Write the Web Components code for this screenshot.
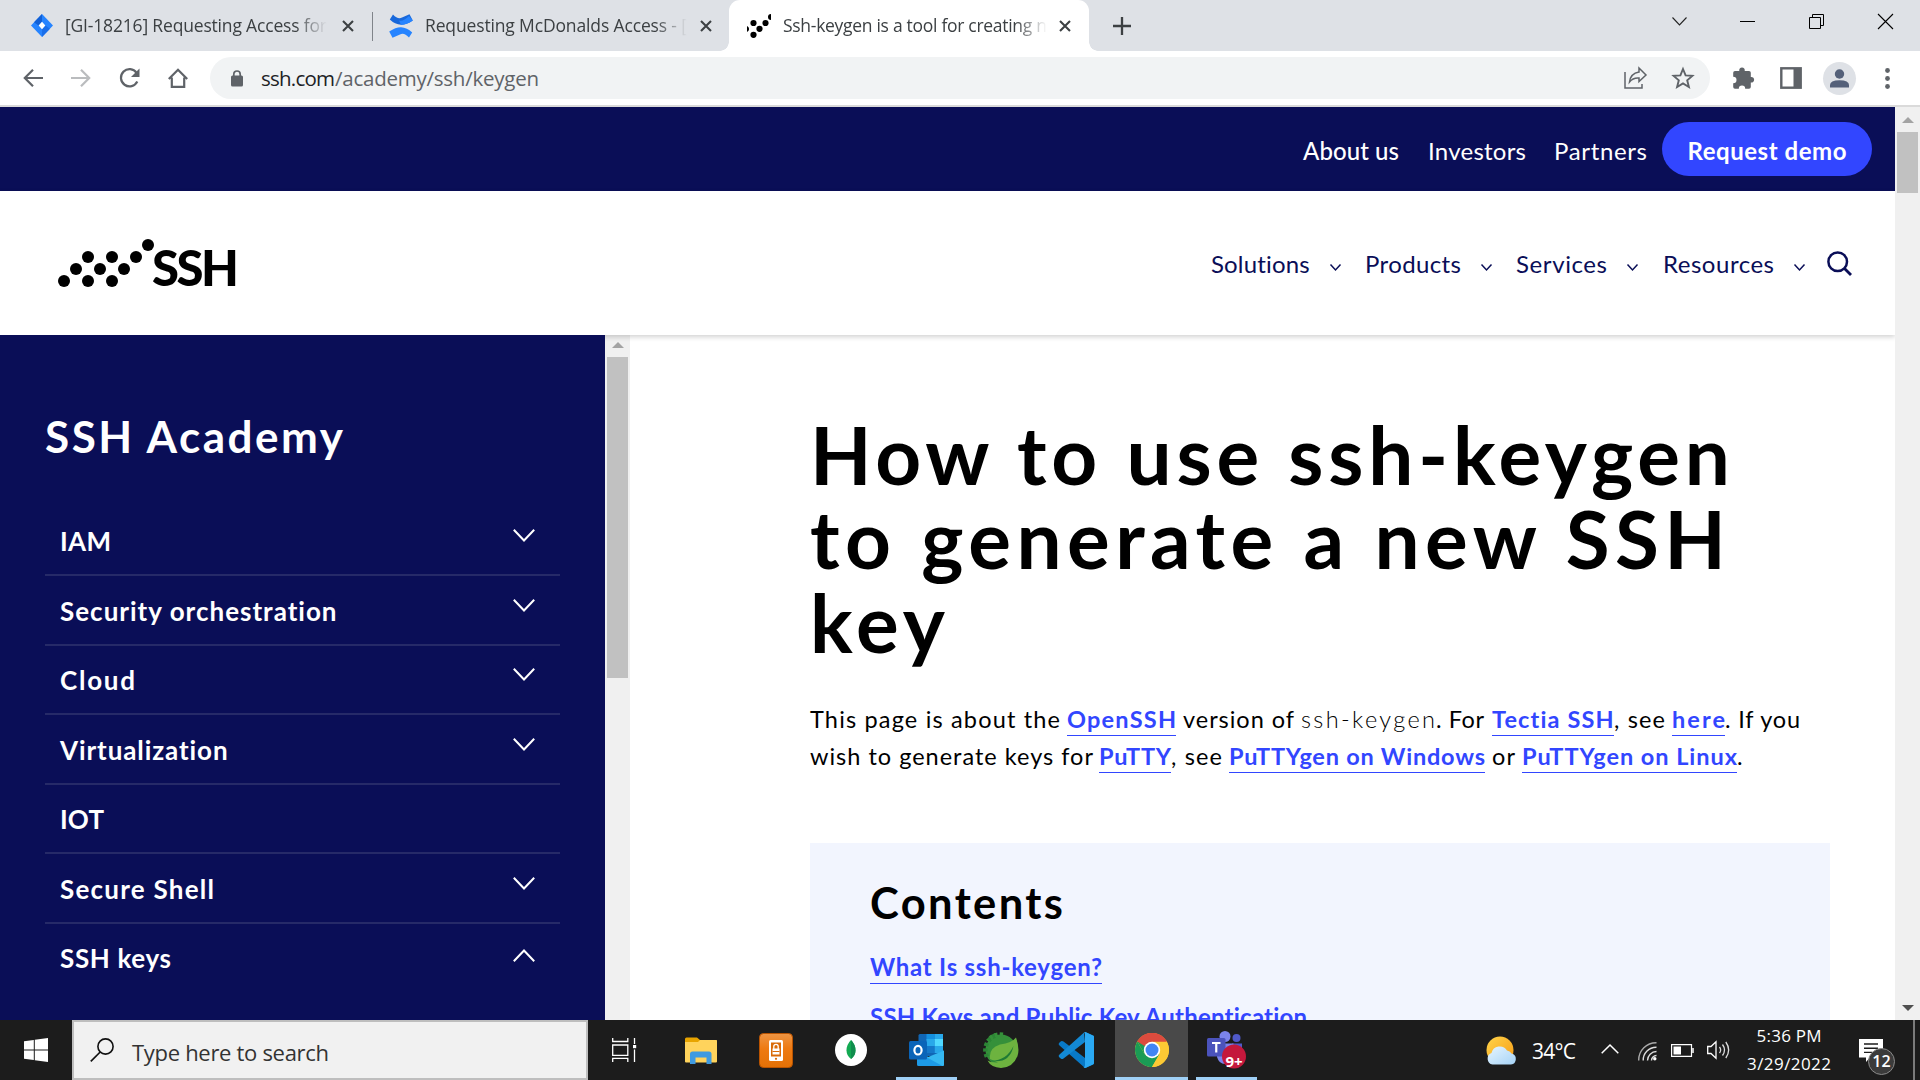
<!DOCTYPE html>
<html lang="en">
<head>
<meta charset="utf-8">
<title>Ssh-keygen is a tool for creating new authentication key pairs</title>
<style>
html,body{margin:0;width:1920px;height:1080px;overflow:hidden;background:#fff}
</style>
</head>
<body>
<desktop-screen></desktop-screen>
<script>
const ICONS = {
jira:[22,23,`<path d="M11 0 22 11.500 11 23 0 11.500Z" fill="#2684ff"/><path d="M11 0v8L7.500 11.500 3 8.300Z" fill="#1260d6"/><path d="M11 23v-8l3.500-3.500L19 14.700Z" fill="#1a6eea"/><path d="M11 7.800 14.300 11.500 11 15.200 7.700 11.500Z" fill="#fff"/>`],
confluence:[24,24,`<path d="M4 .5Q9 6 13 3.600L20.500.2 23.800 6.500Q17 11 12 10.800 6 10.500.8 5.500Z" fill="#1868db"/><path d="M10 6.500Q14 8 20 2L23.800 6.500Q17 11 12 10.800Z" fill="#2684ff"/><path d="M20 23.500Q15 18 11 20.400L3.500 23.800.2 17.500Q7 13 12 13.200 18 13.500 23.200 18.500Z" fill="#2684ff"/>`],
dots:[24,24,`<g><circle cx="6.500" cy="9" r="3.100"/><circle cx="18.500" cy="9" r="3.100"/><circle cx="12.500" cy="14.800" r="3.100"/><circle cx="6.500" cy="20.800" r="3.100"/><path d="M0 12a3.200 3.200 0 0 1 0 6ZM24 0v6a3 3 0 0 1 0-6Z"/></g>`],
x:[12,12,`<path d="M1 1 11 11M11 1 1 11" stroke="#3c4043" stroke-width="2.100" fill="none"/>`],
plus:[18,18,`<path d="M9 0V18M0 9H18" stroke="#3c4043" stroke-width="2.300"/>`],
wchev:[15,9,`<path d="M.5.5 7.500 8 14.500.5" stroke="#222" fill="none" stroke-width="1.100"/>`],
wmin:[15,15,`<path d="M0 7.500H15" stroke="#000"/>`],
wmax:[15,15,`<path d="M.5 3.500h11v11H.5ZM3.500 3.500v-3h11v11h-3" stroke="#000" fill="none"/>`],
wclose:[15,15,`<path d="M0 0 15 15M15 0 0 15" stroke="#000" stroke-width="1.100"/>`],
back:[20,18,`<path d="M20 9H2M10 .8 1.800 9 10 17.200" stroke="#5f6368" stroke-width="2.200" fill="none"/>`],
fwd:[20,18,`<path d="M0 9H18M10 .8 18.200 9 10 17.200" stroke="#babcbe" stroke-width="2.200" fill="none"/>`],
reload:[21,20,`<path d="M17.600 4.800A8.600 8.600 0 1 0 18.300 13.500" stroke="#5f6368" stroke-width="2.200" fill="none"/><path d="M20.500.5V9H12Z" fill="#5f6368"/>`],
home:[20,20,`<path d="M3.800 9.500V18.800H16.200V9.500M.8 11 10 1.800 19.200 11" stroke="#5f6368" stroke-width="2.200" fill="none"/>`],
lock:[12,17,`<rect y="5.500" width="12" height="11" rx="1.500" fill="#5f6368"/><path d="M2.800 7V4.200a3.200 3.200 0 0 1 6.400 0V7" fill="none" stroke="#5f6368" stroke-width="1.700"/>`],
share:[23,22,`<path d="M1 5V21H18V17" fill="none" stroke="#5f6368" stroke-width="1.500"/><path d="M15 1 22 8 15 14.500V11Q9 10.500 5.500 15 6.500 6.500 15 5Z" fill="none" stroke="#5f6368" stroke-width="1.500"/>`],
star:[22,22,`<path d="M11 2 13.600 8.400 20.400 8.900 15.200 13.300 16.900 20 11 16.400 5.100 20 6.800 13.300 1.600 8.900 8.400 8.400Z" fill="none" stroke="#5f6368" stroke-width="1.900"/>`],
puzzle:[22,22,`<path d="M2 4H6.300A2.800 2.800 0 1 1 11.700 4H16a1.800 1.800 0 0 1 1.800 1.800V10A2.800 2.800 0 1 1 17.800 15.500V20A1.800 1.800 0 0 1 16 21.700H12.200A3.200 3.200 0 0 0 5.800 21.700H2A1.800 1.800 0 0 1 .2 20V16.300A3.200 3.200 0 0 0 .2 9.700V5.800A1.800 1.800 0 0 1 2 4Z" fill="#5f6368"/>`],
panel:[22,22,`<rect x="1.300" y="1.300" width="19.400" height="19.400" fill="#fff" stroke="#5f6368" stroke-width="2.400"/><rect x="13.500" y="1" width="7.500" height="20" fill="#5f6368"/>`],
avatar:[33,33,`<circle cx="16.500" cy="16.500" r="16.500" fill="#dee1e6"/><circle cx="16.500" cy="12" r="4.700" fill="#546079"/><path d="M7 25.500V23Q7 18.300 16.500 18.200 26 18.300 26 23V25.500Z" fill="#546079"/>`],
kebab:[5,21,`<g fill="#5f6368"><circle cx="2.500" cy="2.500" r="2.400"/><circle cx="2.500" cy="10.500" r="2.400"/><circle cx="2.500" cy="18.500" r="2.400"/></g>`],
navchev:[11,7,`<path d="M.5.5 5.500 6 10.500.5" stroke="#0a0e57" fill="none" stroke-width="1.500"/>`],
search:[25,25,`<circle cx="10.700" cy="10.700" r="9.300" fill="none" stroke="#0a0e57" stroke-width="2.500"/><path d="M17.500 17.500 24 24" stroke="#0a0e57" stroke-width="2.800"/>`],
down:[22,13,`<path d="M.8.8 11 11.500 21.200.8" stroke="#fff" fill="none" stroke-width="2"/>`],
up:[22,13,`<path d="M.8 12.200 11 1.500 21.200 12.200" stroke="#fff" fill="none" stroke-width="2"/>`],
logodots:[96,48,`<g><circle cx="6" cy="42" r="6"/><circle cx="30" cy="42" r="6"/><circle cx="54" cy="42" r="6"/><circle cx="18" cy="30" r="6"/><circle cx="42" cy="30" r="6"/><circle cx="66" cy="30" r="6"/><circle cx="30" cy="18" r="6"/><circle cx="54" cy="18" r="6"/><circle cx="78" cy="18" r="6"/><circle cx="90" cy="6" r="6"/></g>`],
win:[24,24,`<path d="M0 3.300 9.800 2V11.400H0ZM10.800 1.800 24 0V11.400H10.800ZM0 12.500H9.800V22L0 20.700ZM10.800 12.500H24V24L10.800 22.200Z" fill="#fff"/>`],
mag:[24,24,`<circle cx="15.500" cy="8.500" r="7.600" fill="none" stroke="#111" stroke-width="1.600"/><path d="M10.200 14 .8 23.400" stroke="#111" stroke-width="1.700"/>`],
taskview:[25,24,`<path d="M.7 0V3.500H15.800V0M.7 24V20.300H15.800V24M.7 7H15.800V17.300H.7ZM22.500 0V6M22.500 11.500V24" fill="none" stroke="#fff" stroke-width="1.300"/><rect x="21" y="7" width="3.200" height="3.200" fill="#fff"/>`],
explorer:[32,27,`<path d="M0 2A1.500 1.500 0 0 1 1.500.5H12L15 3V6H0Z" fill="#e8a400"/><path d="M0 5H13L15 3H31.500Q32 3 32 4V24.500Q32 25.500 31 25.500H1Q0 25.500 0 24.500Z" fill="#ffd35c"/><path d="M5 27V17Q5 14.500 7.500 14.500H24Q26.500 14.500 26.500 17V27H21.500V20.500H10.500V27Z" fill="#3f9ae0"/>`],
phone:[34,35,`<defs><linearGradient id="g" x2="0" y2="1"><stop stop-color="#ee9544"/><stop offset=".45" stop-color="#ee7a12"/><stop offset="1" stop-color="#e47106"/></linearGradient></defs><rect x=".5" y=".5" width="33" height="34" rx="4" fill="url(#g)" stroke="#b95300"/><rect x="10" y="7" width="14" height="21" rx="1.500" fill="#fff"/><rect x="12" y="9.500" width="10" height="14" fill="#d96a08"/><rect x="13.500" y="15.500" width="7" height="6" fill="#fff"/><path d="M14.800 16V13.500a2.200 2.200 0 0 1 4.400 0V16" fill="none" stroke="#fff" stroke-width="1.300"/><path d="M13.500 18.500h7" stroke="#d96a08"/><circle cx="17" cy="25.800" r="1.100" fill="#d96a08"/>`],
mongo:[32,32,`<circle cx="16" cy="16" r="16" fill="#fff"/><path d="M16 6Q11.500 10.500 11.500 16.500 11.500 21.500 16 25 20.500 21.500 20.500 16.500 20.500 10.500 16 6Z" fill="#13aa52"/><path d="M16 6Q20.500 10.500 20.500 16.500 20.500 21.500 16 25Z" fill="#118d4d"/>`],
outlook:[35,32,`<rect x="9.500" width="24.500" height="22" rx="1.500" fill="#1066b5"/><rect x="17.500" y="0" width="8.200" height="6" fill="#1490df"/><rect x="25.700" y="0" width="8.300" height="6" fill="#28a8ea"/><rect x="17.500" y="5" width="8.200" height="7" fill="#28a8ea"/><rect x="25.700" y="5" width="8.300" height="7" fill="#50d9ff"/><rect x="17.500" y="12" width="8.200" height="7" fill="#1478c9"/><rect x="25.700" y="12" width="8.300" height="7" fill="#28a8ea"/><path d="M8 17 21.500 24 35 16.500V30.500A1.500 1.500 0 0 1 33.500 32H9.500A1.500 1.500 0 0 1 8 30.500Z" fill="#1d9ae6"/><path d="M35 16.500V30.500A1.500 1.500 0 0 1 33.500 32L18 23.500Z" fill="#35b8f1"/><rect y="7" width="18" height="18.500" rx="1.500" fill="#0a64b8"/><ellipse cx="9" cy="16.200" rx="3.600" ry="4.300" fill="none" stroke="#fff" stroke-width="2.200"/>`],
spring:[36,36,`<circle cx="18" cy="18" r="15.500" fill="#35903a"/><path d="M12 3.700A15.500 15.500 0 0 0 4 25" fill="none" stroke="#2c8535" stroke-width="4.500" stroke-dasharray="3.200 2.300"/><path d="M20 2.500Q10 .8 5 9" fill="none" stroke="#35903a" stroke-width="4" stroke-dasharray="3.200 2.300"/><path d="M33 5.500Q37 17 34.500 24 30 35.500 18 36 8 35.500 4.500 28.500 8 31 15 30.500L7 27Q5.500 16 17 12.500 29 11 33 5.500Z" fill="#6db33f"/><path d="M5.500 28.500Q23 30 30.500 14 26.500 33 5.500 28.500Z" fill="#1f7a35"/>`],
vscode:[36,36,`<path d="M27 0 36 4V32L27 36 1.500 13.500Q0 12.300 1 11L3 9.200Q4.200 8.500 5.500 9.500L27 26Z" fill="#0879c7"/><path d="M27 10 5.500 26.500Q4.200 27.500 3 26.800L1 25Q0 23.700 1.500 22.500L26 .5Z" fill="#1389d4"/><path d="M26 .5Q27-.3 28 .2L35 3.600Q36 4 36 5V31Q36 32 35 32.400L28 35.800Q26.500 36.300 25.500 35 27 35.500 27 33V3Q27 1 26 .5Z" fill="#2aa9f3"/>`],
chrome:[34,34,`<circle cx="17" cy="17" r="17" fill="#fcc934"/><path d="M17 17 2.300 8.500A17 17 0 0 1 31.700 8.500Z" fill="#db4437"/><path d="M2.300 8.500A17 17 0 0 0 17 34L24.400 21.300 9.600 21.300Z" fill="#1a9c55"/><path d="M17 8.500H31.700A17 17 0 0 1 17 34L24.400 21.200Z" fill="#fcc934"/><path d="M2.300 8.500 9.600 21.300 17 8.500Z" fill="#1a9c55"/><path d="M2.300 8.500A17 17 0 0 1 31.700 8.500H17L9.600 13Z" fill="#dc4b3e"/><circle cx="17" cy="17" r="8.200" fill="#fff"/><circle cx="17" cy="17" r="6.500" fill="#4285f4"/>`],
teams:[39,38,`<circle cx="18" cy="5.500" r="5.500" fill="#7b83eb"/><circle cx="29.500" cy="7" r="4" fill="#5059c9"/><path d="M25 12.500H35V22Q34 28 27 28Z" fill="#5059c9"/><path d="M10 12.500H26.500V24Q26 33 18 33 12 33 10 26Z" fill="#7b83eb"/><rect y="7" width="18.500" height="18.500" rx="1.500" fill="#4b53bc"/><path d="M5 12H13.500M9.250 12V21.500" stroke="#fff" stroke-width="2.200"/><circle cx="27" cy="25.500" r="12" fill="#c4183c"/>`],
weather:[31,29,`<defs><linearGradient id="s" x2="1" y2="1"><stop stop-color="#ffd54a"/><stop offset="1" stop-color="#f79a14"/></linearGradient><linearGradient id="c" x2="1" y2="1"><stop stop-color="#e6f5ff"/><stop offset="1" stop-color="#a6d3f6"/></linearGradient></defs><circle cx="14" cy="14" r="13.500" fill="url(#s)"/><path d="M6.500 28.500A6 6 0 0 1 5.500 17 8.500 8.500 0 0 1 21 14.500 6 6 0 0 1 25.500 17.500 5.600 5.600 0 0 1 25 28.500Z" fill="url(#c)"/>`],
caret:[18,10,`<path d="M.7 9.300 9 1 17.300 9.300" stroke="#fff" fill="none" stroke-width="1.500"/>`],
wifi:[19,19,`<g fill="none" stroke="#ddd" stroke-width="1.400"><path d="M.7 18.500A17.500 17.500 0 0 1 18.500.7" stroke="#aaa"/><path d="M5.200 18.500A13 13 0 0 1 18.500 5.200"/><path d="M9.500 18.500A9 9 0 0 1 18.500 9.500"/><path d="M13.500 18.500A5 5 0 0 1 18.500 13.500"/></g><circle cx="16.800" cy="16.800" r="1.700" fill="#fff"/>`],
battery:[23,13,`<path d="M.6.6H20.500V12.400H.6Z" fill="none" stroke="#fff" stroke-width="1.200"/><rect x="2.500" y="2.500" width="7.500" height="8" fill="#fff"/><path d="M22 4V9" stroke="#fff" stroke-width="1.500"/>`],
volume:[23,18,`<path d="M.7 5.500H4L9 .8V17.200L4 12.500H.7Z" fill="none" stroke="#fff" stroke-width="1.300"/><g fill="none" stroke="#ddd" stroke-width="1.300"><path d="M12.500 6Q14.800 9 12.500 12M15.500 3.500Q19.500 9 15.500 14.500M18.800 1Q24.500 9 18.800 17"/></g>`],
note:[24,23,`<path d="M0 0H24V18.500H11L7 23V18.500H0Z" fill="#fff"/><path d="M5 5H19M5 9.200H19M5 13.400H13" stroke="#1c1c1c" stroke-width="1.400"/>`],
};

class Base extends HTMLElement{
  connectedCallback(){
    if(this.shadowRoot) return;
    this.attachShadow({mode:"open"}).innerHTML = this.view();
    this.ready?.();
  }
  a(n,d=""){ return this.getAttribute(n) ?? d; }
}

customElements.define("ui-icon", class extends Base{
  view(){
    const [w,h,b]=ICONS[this.a("name")];
    return `<style>:host{display:block;flex:none;width:${w}px;height:${h}px}svg{display:block;overflow:visible}</style><svg width="${w}" height="${h}" viewBox="0 0 ${w} ${h}">${b}</svg>`;
  }
});

/* One run of text, tracked so that it fills the width in the w attribute. */
customElements.define("ui-text", class extends Base{
  view(){
    const link=this.hasAttribute("link"), s=+this.a("size","24");
    return `<style>
    :host{display:block;flex:none;white-space:pre;font-size:${s}px;line-height:1.2;font-weight:${this.a("weight",link?"700":"400")};${link?"color:#3246ff;":""}width:${this.a("w")}px;box-sizing:content-box}
    span{display:inline-block;${link?"width:100%;border-bottom:1px solid #3246ff;padding-bottom:2px":""}}
    </style><span><slot></slot></span>`;
  }
  ready(){
    const w=+this.a("w"), n=this.textContent.length, r=document.createRange();
    r.selectNodeContents(this);
    const nat=r.getBoundingClientRect().width;
    if(w&&n>1&&nat) this.shadowRoot.querySelector("span").style.letterSpacing=((w-nat)/(n-1)).toFixed(3)+"px";
  }
});

customElements.define("scroll-bar", class extends Base{
  view(){ return `<style>
  :host{display:flex;flex-direction:column;align-items:center;flex:none;width:25px;height:100%;box-sizing:border-box;background:#f0f0f0;padding:var(--pt,10px) 0 9px}
  .u{border:6px solid transparent;border-top:0;border-bottom:6px solid #a3a3a3}
  .t{width:21px;background:#c1c1c1;height:${this.a("thumb")}px;margin-top:9px}
  .d{margin-top:auto;border:6px solid transparent;border-bottom:0;border-top:6px solid #505050}
  </style><i class="u"></i><i class="t"></i>${this.hasAttribute("down")?'<i class="d"></i>':''}`; }
});

customElements.define("browser-tab", class extends Base{
  view(){ const on=this.hasAttribute("active"), bg=on?"#fff":"#dee1e6"; return `<style>
  :host{display:flex;flex:none;align-items:center;height:51px;box-sizing:border-box;background:${bg};color:#3c4043;${on?"border-radius:11px 11px 0 0;":""}position:relative}
  .f{overflow:hidden;-webkit-mask-image:linear-gradient(90deg,#000 calc(100% - 32px),transparent)}
  ${on?`:host::before,:host::after{content:"";position:absolute;bottom:0;width:9px;height:9px}
  :host::before{left:-9px;background:radial-gradient(circle at 0 0,transparent 8.500px,#fff 9px)}
  :host::after{right:-9px;background:radial-gradient(circle at 100% 0,transparent 8.500px,#fff 9px)}`:""}
  </style><ui-icon name="${this.a("icon")}"></ui-icon><div class="f" style="margin-left:${this.a("gap","12")}px"><slot></slot></div><ui-icon name="x" style="margin-left:${this.a("xgap","15")}px"></ui-icon>`; }
});

customElements.define("tab-strip", class extends Base{
  view(){ return `<style>
  :host{display:flex;height:51px;background:#dee1e6;align-items:center;font-family:"Open Sans","Noto Sans",sans-serif}
  ui-icon{margin-bottom:8px}
  i{width:1px;height:29px;background:#80848a;margin-left:18px;margin-right:16px;margin-top:2px}
  </style>
  <browser-tab icon="jira" style="margin-left:31px;width:323px" gap="12"><ui-text size="17.500" w="262">[GI-18216] Requesting Access for</ui-text></browser-tab><i></i>
  <browser-tab icon="confluence" style="width:340px" xgap="13"><ui-text size="17.500" w="262">Requesting McDonalds Access - [</ui-text></browser-tab>
  <browser-tab active icon="dots" style="width:360px;padding-left:18px" xgap="12"><ui-text size="17.500" w="264">Ssh-keygen is a tool for creating n</ui-text></browser-tab>
  <ui-icon name="plus" style="margin:0 0 0 24px"></ui-icon>
  <ui-icon name="wchev" style="margin-left:541px"></ui-icon><ui-icon name="wmin" style="margin-left:53px"></ui-icon>
  <ui-icon name="wmax" style="margin-left:54px"></ui-icon><ui-icon name="wclose" style="margin-left:54px"></ui-icon>`; }
});

customElements.define("browser-toolbar", class extends Base{
  view(){ return `<style>
  :host{display:flex;height:56px;box-sizing:border-box;background:#fff;border-bottom:2px solid #dadada;align-items:center;padding-left:23px;font-family:"Open Sans","Noto Sans",sans-serif}
  .o{display:flex;align-items:center;width:1500px;height:42px;border-radius:21px;background:#f1f3f4;margin-left:22px}
  </style>
  <ui-icon name="back"></ui-icon><ui-icon name="fwd" style="margin-left:28px"></ui-icon><ui-icon name="reload" style="margin-left:28px"></ui-icon><ui-icon name="home" style="margin-left:28px"></ui-icon>
  <div class="o"><ui-icon name="lock" style="margin-left:21px"></ui-icon><ui-text size="20.500" w="74" style="margin-left:18px;color:#202124">ssh.com</ui-text><ui-text size="20.500" w="204" style="color:#5f6368">/academy/ssh/keygen</ui-text>
  <ui-icon name="share" style="margin-left:1085px"></ui-icon><ui-icon name="star" style="margin-left:25px"></ui-icon></div>
  <ui-icon name="puzzle" style="margin-left:23px"></ui-icon><ui-icon name="panel" style="margin-left:25px"></ui-icon><ui-icon name="avatar" style="margin-left:21px"></ui-icon><ui-icon name="kebab" style="margin-left:29px"></ui-icon>`; }
});

customElements.define("site-topbar", class extends Base{
  view(){ return `<style>
  :host{display:flex;height:84px;background:#0a0e57;color:#fff;align-items:center;padding-left:1303px}
  ui-text{padding-top:4px}
  .b{display:flex;align-items:center;justify-content:center;width:210px;height:54px;border-radius:27px;background:#3246ff;margin-left:15px}
  </style><ui-text w="96" weight="500">About us</ui-text><ui-text w="98" style="margin-left:29px">Investors</ui-text><ui-text w="93" style="margin-left:28px">Partners</ui-text>
  <div class="b"><ui-text w="159" weight="700">Request demo</ui-text></div>`; }
});

customElements.define("nav-item", class extends Base{
  view(){ return `<style>:host{display:flex;align-items:center}ui-text{padding-top:3px}ui-icon{margin:10px 0 0 20px}</style><ui-text w="${this.a("w")}">${this.a("label")}</ui-text><ui-icon name="navchev"></ui-icon>`; }
});

customElements.define("site-nav", class extends Base{
  view(){ return `<style>
  :host{display:flex;height:144px;background:#fff;color:#0a0e57;align-items:center;padding-left:58px;box-sizing:border-box;box-shadow:0 2px 5px rgba(0,0,0,.18);z-index:1}
  .l{display:flex;width:1153px;color:#000;align-items:center}
  </style><div class="l"><ui-icon name="logodots"></ui-icon><ui-text size="49" weight="900" w="87" style="padding-top:8px;margin-left:-2px">SSH</ui-text></div>
  <nav-item label="Solutions" w="99"></nav-item><nav-item label="Products" w="96" style="margin-left:24px"></nav-item><nav-item label="Services" w="91" style="margin-left:24px"></nav-item><nav-item label="Resources" w="111" style="margin-left:25px"></nav-item>
  <ui-icon name="search" style="margin-left:22px"></ui-icon>`; }
});

customElements.define("side-item", class extends Base{
  view(){ const i=this.a("icon"); return `<style>
  :host{display:flex;height:69.500px;box-sizing:border-box;align-items:center;justify-content:space-between;padding:0 25px 0 15px;border-bottom:2px solid #262a68}
  :host(:last-child){border-color:transparent}
  ui-text{padding-top:3px}ui-icon{margin-bottom:${i=="up"?4:9}px}
  </style><ui-text size="26" weight="700" w="${this.a("w")}"><slot></slot></ui-text>${i?`<ui-icon name="${i}"></ui-icon>`:""}`; }
  ready(){
    const t=this.shadowRoot.querySelector("ui-text"); t.textContent=this.textContent; t.ready();
  }
});

customElements.define("side-menu", class extends Base{
  view(){ return `<style>
  :host{display:block;width:605px;height:685px;flex:none;background:#0a0e57;color:#fff;box-sizing:border-box;padding:75px 45px 0;overflow:hidden;z-index:2}
  .t{height:52px;display:flex;align-items:center;margin-bottom:44.500px}
  </style><div class="t"><ui-text size="44" weight="700" w="298">SSH Academy</ui-text></div>
  <div><side-item w="51" icon="down">IAM</side-item><side-item w="277" icon="down">Security orchestration</side-item><side-item w="75" icon="down">Cloud</side-item><side-item w="168" icon="down">Virtualization</side-item><side-item w="44">IOT</side-item><side-item w="154" icon="down">Secure Shell</side-item><side-item w="111" icon="up">SSH keys</side-item></div>`; }
});

customElements.define("article-page", class extends Base{
  view(){ return `<style>
  :host{display:block;width:1265px;height:685px;box-sizing:border-box;padding:77px 65px 0 180px;overflow:hidden;color:#000;background:#fff}
  h1{margin:0;font-size:inherit;font-weight:inherit}h1 div{height:84px;display:flex;align-items:center}
  p{margin:36px 0 0}p div{display:flex;align-items:baseline;height:37px;padding-top:5px;box-sizing:border-box}
  .b{margin-top:69px;background:#f2f5fe;padding:34px 60px 0;height:400px}
  .c{height:50px;display:flex;align-items:center;margin-bottom:15px}
  .k{height:50px;display:flex;align-items:center}
  .k ui-text{padding-top:3px}
  </style>
  <h1><div><ui-text size="80" weight="700" w="920">How to use ssh-keygen</ui-text></div><div><ui-text size="80" weight="700" w="916">to generate a new SSH</ui-text></div><div><ui-text size="80" weight="700" w="135">key</ui-text></div></h1>
  <p><div class="l"></div></p>
  <div class="b"><div class="c"><ui-text size="43.500" weight="700" w="193">Contents</ui-text></div>
  <div class="k"><ui-text link w="232">What Is ssh-keygen?</ui-text></div><div class="k"><ui-text link w="438">SSH Keys and Public Key Authentication</ui-text></div></div>`.replace('<p><div class="l"></div></p>',
  `<section><style>section{margin:36px 0 0}.r{display:flex;align-items:baseline;height:37px;padding-top:5px;box-sizing:border-box}</style>
  <div class="r"><ui-text size="23.500" w="250">This page is about the</ui-text><ui-text size="23.500" link w="109" style="margin-left:7px">OpenSSH</ui-text><ui-text size="23.500" w="111" style="margin-left:7px">version of</ui-text><ui-text size="23.500" w="134" weight="300" style="margin-left:7px">ssh-keygen</ui-text><ui-text size="23.500" w="48" style="margin-left:1px">. For</ui-text><ui-text size="23.500" link w="122" style="margin-left:8px">Tectia SSH</ui-text><ui-text size="23.500" w="51">, see</ui-text><ui-text size="23.500" link w="53" style="margin-left:7px">here</ui-text><ui-text size="23.500" w="75">. If you</ui-text></div>
  <div class="r"><ui-text size="23.500" w="283">wish to generate keys for</ui-text><ui-text size="23.500" link w="72" style="margin-left:6px">PuTTY</ui-text><ui-text size="23.500" w="51">, see</ui-text><ui-text size="23.500" link w="256" style="margin-left:7px">PuTTYgen on Windows</ui-text><ui-text size="23.500" w="23" style="margin-left:7px">or</ui-text><ui-text size="23.500" link w="215" style="margin-left:7px">PuTTYgen on Linux</ui-text><ui-text size="23.500" w="6">.</ui-text></div></section>`); }
});

customElements.define("web-page", class extends Base{
  view(){ return `<style>
  :host{display:flex;height:913px;font-family:Lato,"Liberation Sans",sans-serif;overflow:hidden}
  .m{width:1895px;display:flex;flex-direction:column;overflow:hidden}.c{display:flex;height:685px}
  </style><div class="m"><site-topbar></site-topbar><site-nav></site-nav><div class="c"><side-menu></side-menu><scroll-bar thumb="321" style="--pt:7px"></scroll-bar><article-page></article-page></div></div><scroll-bar thumb="61" down></scroll-bar>`; }
});

customElements.define("task-app", class extends Base{
  view(){ const on=this.hasAttribute("active"), run=this.hasAttribute("running"); return `<style>
  :host{display:flex;flex:none;height:60px;box-sizing:border-box;align-items:center;justify-content:center;position:relative;${on?"background:#494949;":""}${on||run?"border-bottom:3px solid #9fd0f6;padding-top:3px;":""}}
  b{position:absolute;left:15px;top:33px;width:24px;text-align:center;font:700 15px/22px "Open Sans",sans-serif;color:#fff}
  </style><ui-icon name="${this.a("icon")}"></ui-icon>${this.a("badge")?`<b style="left:26px;top:30px">${this.a("badge")}</b>`:""}`; }
});

customElements.define("task-bar", class extends Base{
  view(){ return `<style>
  :host{display:flex;height:60px;background:#1c1c1c;color:#fff;align-items:center;font-family:"Open Sans","Noto Sans",sans-serif}
  .s{display:flex;align-items:center;width:516px;height:60px;box-sizing:border-box;border:2px solid #bebebe;background:#f1f1f1;color:#333;margin-left:24px}
  .c{display:flex;flex-direction:column;align-items:center;width:84px;margin-left:17px;gap:8px}
  .n{position:relative;margin-left:28px}
  .n b{position:absolute;left:9px;top:9px;width:27px;height:27px;box-sizing:border-box;border:1px solid #8a8a8a;border-radius:50%;background:#3b3b3b;text-align:center;font:600 16px/25px "Open Sans",sans-serif}
  .e{width:2px;height:60px;background:#7b7b7b;margin-left:30px}
  </style>
  <ui-icon name="win" style="margin-left:24px"></ui-icon>
  <div class="s"><ui-icon name="mag" style="margin-left:16px"></ui-icon><ui-text size="22" w="197" style="margin-left:18px;padding-top:4px">Type here to search</ui-text></div>
  <ui-icon name="taskview" style="margin-left:24px"></ui-icon>
  <task-app icon="explorer" style="margin-left:48px"></task-app>
  <task-app icon="phone" style="margin-left:42px"></task-app>
  <task-app icon="mongo" style="margin-left:42px"></task-app>
  <task-app icon="outlook" running style="margin-left:29px;width:61px"></task-app>
  <task-app icon="spring" style="margin-left:26px"></task-app>
  <task-app icon="vscode" style="margin-left:39px"></task-app>
  <task-app icon="chrome" active style="margin-left:21px;width:73px"></task-app>
  <task-app icon="teams" running badge="9+" style="margin-left:8px;width:61px"></task-app>
  <ui-icon name="weather" style="margin-left:229px"></ui-icon>
  <ui-text size="21" w="44" style="margin-left:15px;padding-top:4px">34°C</ui-text>
  <ui-icon name="caret" style="margin-left:25px;margin-bottom:2px"></ui-icon><ui-icon name="wifi" style="margin-left:19px;margin-top:2px"></ui-icon><ui-icon name="battery" style="margin-left:14px"></ui-icon><ui-icon name="volume" style="margin-left:13px"></ui-icon>
  <div class="c"><ui-text size="17" w="65">5:36 PM</ui-text><ui-text size="17" w="84">3/29/2022</ui-text></div>
  <div class="n"><ui-icon name="note"></ui-icon><b>12</b></div><div class="e"></div>`; }
});

customElements.define("desktop-screen", class extends Base{
  view(){ return `<style>:host{display:block;width:1920px;height:1080px;overflow:hidden}</style><tab-strip></tab-strip><browser-toolbar></browser-toolbar><web-page></web-page><task-bar></task-bar>`; }
});
</script>
</body>
</html>
